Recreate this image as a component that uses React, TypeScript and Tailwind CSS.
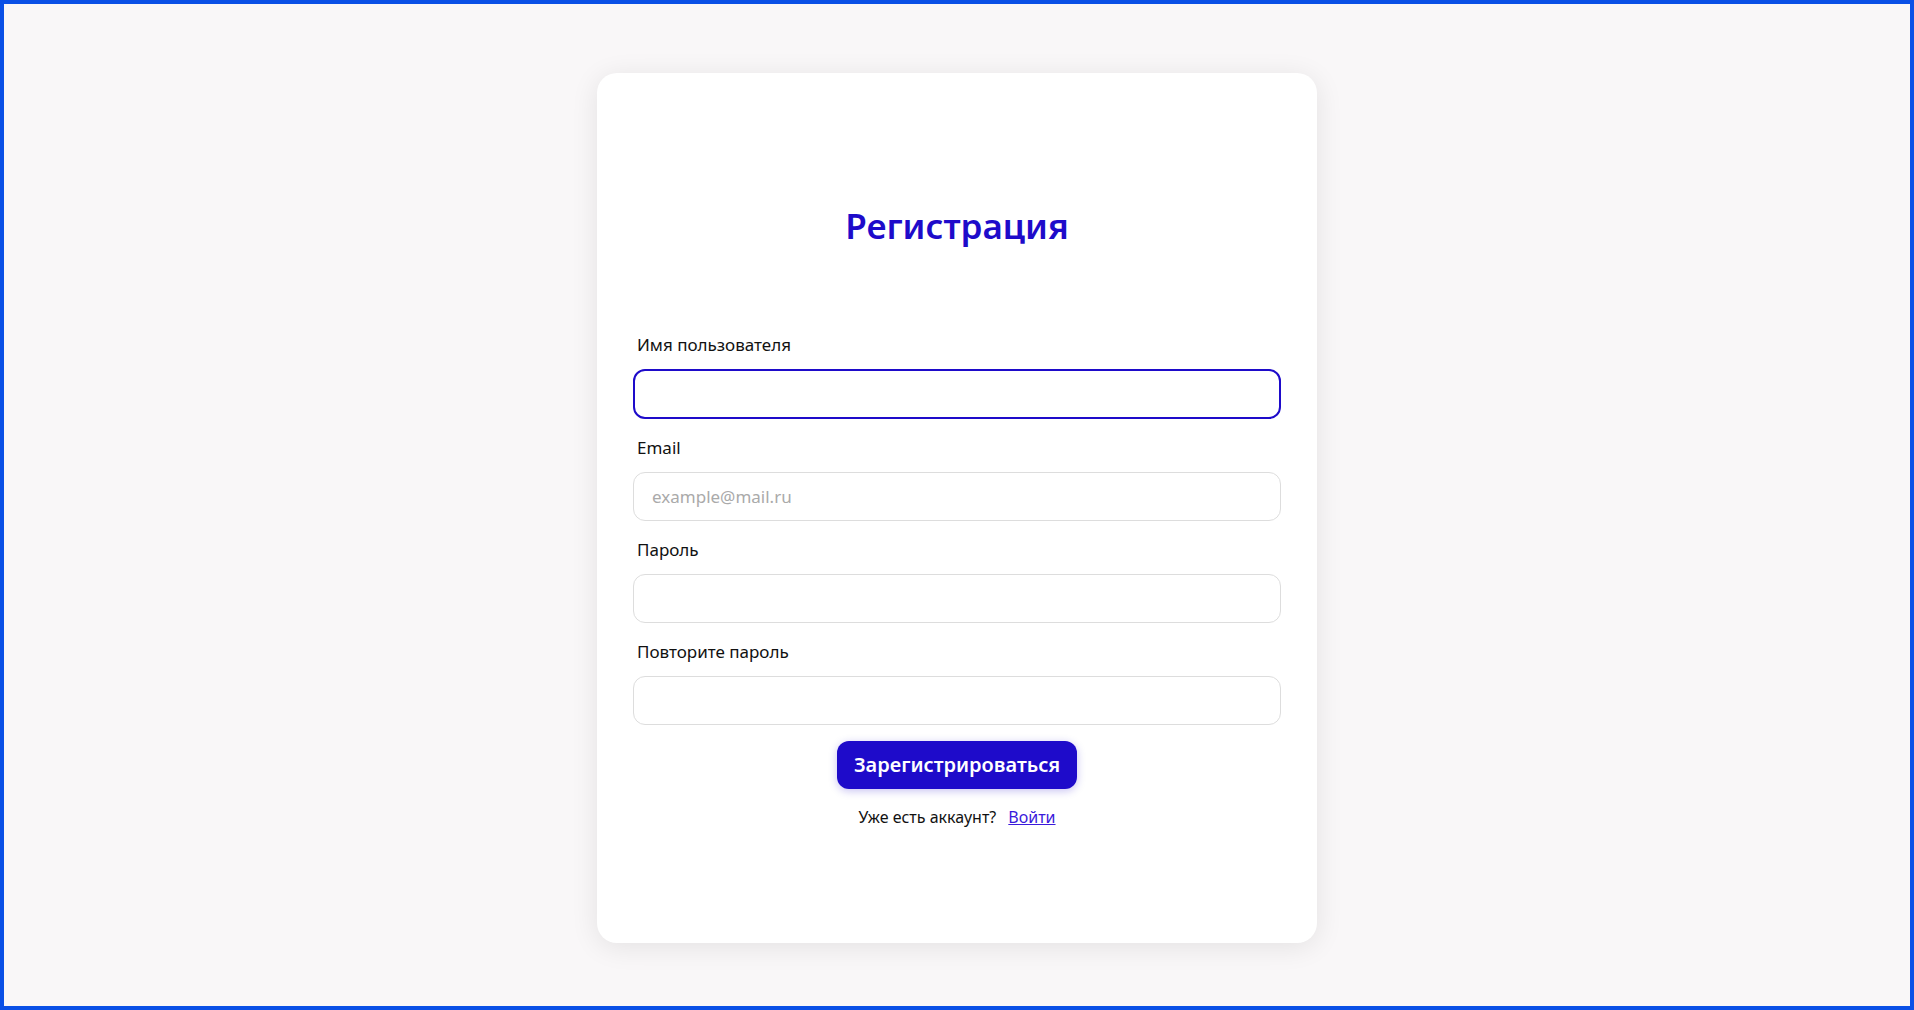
import React from "react";

function Field({ label, placeholder, focused, type = "text" }: { label: string; placeholder?: string; focused?: boolean; type?: string }) {
  return (
    <div className="flex flex-col">
      <label className="h-6 pl-1 text-[17px] leading-6 text-[#111]">{label}</label>
      <input
        type={type}
        placeholder={placeholder}
        className={
          focused
            ? "mt-3 h-[50px] w-full rounded-[12px] border-2 border-[#1e0bca] bg-white px-[17px] text-[16px] outline-none placeholder:text-[#aaa]"
            : "mt-3 h-[49px] w-full rounded-[12px] border border-[#dddddd] bg-white px-[18px] text-[17px] outline-none placeholder:text-[#aaa]"
        }
      />
    </div>
  );
}

export default function App() {
  return (
    <div
      className="flex h-[1010px] w-full justify-center border-4 border-[#0a50e6] bg-[#f9f7f8]"
      style={{ fontFamily: '"Noto Sans", "Open Sans", sans-serif' }}
    >
      <div className="mt-[69px] flex h-[870px] w-[720px] flex-col rounded-[20px] bg-white px-[36px] shadow-[0_4px_28px_rgba(0,0,0,0.09)]">
        <h1 className="mt-[131px] text-center text-[35px] font-semibold leading-[44px] text-[#1e0bca]">Регистрация</h1>
        <div className="mt-[85px] flex flex-col gap-[17px]">
          <Field label="Имя пользователя" focused />
          <Field label="Email" placeholder="example@mail.ru" />
          <Field label="Пароль" type="password" />
          <Field label="Повторите пароль" type="password" />
        </div>
        <div className="mt-[16px] flex justify-center">
          <button className="h-[48px] w-[240px] rounded-[12px] bg-[#1e0bca] text-[20px] font-semibold text-white shadow-[0_2px_8px_rgba(30,11,202,0.25)]">
            Зарегистрироваться
          </button>
        </div>
        <div className="mt-[16px] flex justify-center gap-[12px] text-[16px] leading-6 text-[#111]">
          <span>Уже есть аккаунт?</span>
          <a href="#" className="text-[#3a1adb] underline">Войти</a>
        </div>
      </div>
    </div>
  );
}
